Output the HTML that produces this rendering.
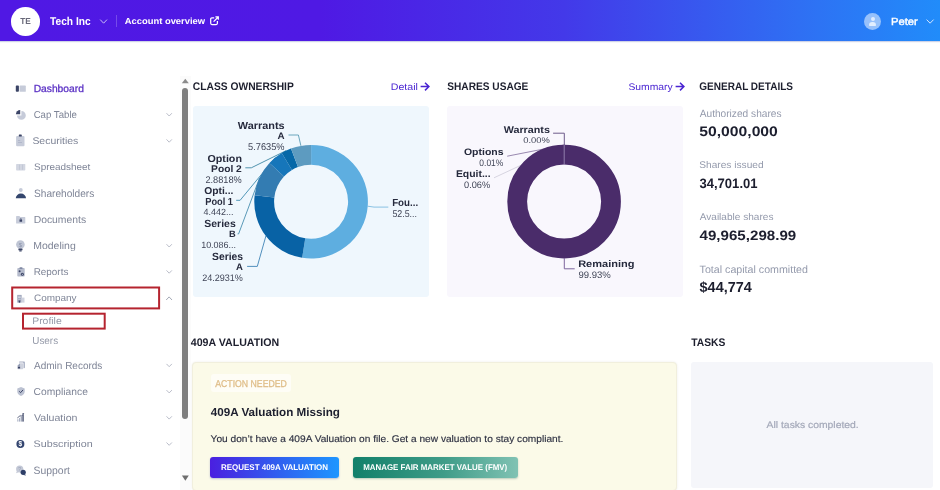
<!DOCTYPE html>
<html><head><meta charset="utf-8">
<style>
*{box-sizing:border-box;margin:0;padding:0}
html,body{width:940px;height:490px;overflow:hidden;background:#fff;font-family:"Liberation Sans",sans-serif}
.abs{position:absolute}
.t{position:absolute;white-space:nowrap;line-height:1;transform-origin:0 0;font-family:"Liberation Sans",sans-serif}
#hdr{position:absolute;left:0;top:0;width:940px;height:41px;background:linear-gradient(90deg,#5018e4 0%,#4f19e4 34%,#4339e9 60%,#2f6ff3 85%,#218cfa 100%);box-shadow:0 1px 1px rgba(60,80,160,.25)}
svg{position:absolute;left:0;top:0}
</style></head><body>
<div id="hdr"></div>
<div class="abs" style="left:11.2px;top:7px;width:28.6px;height:28.6px;border-radius:50%;background:#fff"></div>
<div class="abs" style="left:116.4px;top:15.3px;width:1px;height:12px;background:rgba(255,255,255,.22)"></div>
<div class="abs" style="left:864px;top:12.8px;width:17.3px;height:17.3px;border-radius:50%;background:rgba(255,255,255,.52);overflow:hidden"><div class="abs" style="left:6.5px;top:4px;width:4.3px;height:4.3px;border-radius:50%;background:rgba(255,255,255,.72)"></div><div class="abs" style="left:5.1px;top:8.9px;width:7.1px;height:4px;border-radius:3.2px 3.2px 0.8px 0.8px;background:rgba(255,255,255,.72)"></div></div>

<div class="abs" style="left:193px;top:106px;width:236px;height:191px;background:#eff7fd;border-radius:3px"></div>
<div class="abs" style="left:447px;top:106px;width:236px;height:191px;background:#f9f7fd;border-radius:3px"></div>
<div class="abs" style="left:192px;top:361.5px;width:484.5px;height:129px;background:#fbfae8;border:1px solid #f1efdd;border-radius:4px;box-shadow:0 0 2px rgba(120,120,80,.15)"></div>
<div class="abs" style="left:691.3px;top:361.5px;width:241.7px;height:126.3px;background:#f5f6fa;border-radius:3px"></div>
<div class="abs" style="left:210.5px;top:374.4px;width:80px;height:17.6px;background:#fefdf6;border-radius:3px"></div>
<div class="abs" style="left:210.4px;top:457.2px;width:128.4px;height:20.6px;border-radius:3px;background:linear-gradient(90deg,#4a1fe0,#2f62f0 55%,#1e96ff);box-shadow:0 1px 2px rgba(40,60,160,.3)"></div>
<div class="abs" style="left:352.8px;top:457.2px;width:165.3px;height:20.6px;border-radius:3px;background:linear-gradient(90deg,#12806a,#3f9c88 55%,#80c2b3);box-shadow:0 1px 2px rgba(40,100,90,.3)"></div>


<div class="abs" style="left:180px;top:76px;width:11px;height:414px;background:#fbfbfb"></div>
<div class="abs" style="left:182.4px;top:88.3px;width:6px;height:330.7px;border-radius:3px;background:#7e7e7e"></div>

<svg width="940" height="490" viewBox="0 0 940 490" style="will-change:transform">
<path d="M181.8,83.2 L185.3,78.7 L188.8,83.2Z" fill="#8a8a8a"/>
<path d="M181.9,475.4 L188.8,475.4 L185.35,480.8Z" fill="#6e6e6e"/>
<polyline points="100.2,19.6 103.6,23.2 107,19.6" fill="none" stroke="#c9bdf6" stroke-width="1"/>
<polyline points="926.6,19.6 930.1,23.2 933.6,19.6" fill="none" stroke="#d6e6fd" stroke-width="1"/>
<rect x="12.2" y="287.5" width="146.9" height="20.9" fill="none" stroke="#b5242f" stroke-width="2"/>
<rect x="23" y="313.7" width="81.7" height="14.9" fill="none" stroke="#b5242f" stroke-width="2"/>
<!-- external link -->
<path d="M214.2,17.8 h-2.3 a1.2,1.2 0 0 0 -1.2,1.2 v4.3 a1.2,1.2 0 0 0 1.2,1.2 h4.3 a1.2,1.2 0 0 0 1.2,-1.2 v-2.2" fill="none" stroke="#fff" stroke-width="1.25"/>
<path d="M213.6,21.6 L218,17.2 M215.4,16.9 h2.9 v2.9" fill="none" stroke="#fff" stroke-width="1.25"/>
<!-- arrows -->
<path d="M420.6,86.6 H428.6 M425,82.8 L428.9,86.6 L425,90.4" fill="none" stroke="#4a25d2" stroke-width="1.5"/>
<path d="M675.6,86.6 H683.6 M680,82.8 L683.9,86.6 L680,90.4" fill="none" stroke="#4a25d2" stroke-width="1.5"/>
<polyline points="166.5,113.2 169.2,116.0 171.9,113.2" fill="none" stroke="#b2b6c3" stroke-width="0.9"/><polyline points="166.5,139.4 169.2,142.20000000000002 171.9,139.4" fill="none" stroke="#b2b6c3" stroke-width="0.9"/><polyline points="166.5,244.2 169.2,247.0 171.9,244.2" fill="none" stroke="#b2b6c3" stroke-width="0.9"/><polyline points="166.5,270.4 169.2,273.2 171.9,270.4" fill="none" stroke="#b2b6c3" stroke-width="0.9"/><polyline points="166.5,363.9 169.2,366.7 171.9,363.9" fill="none" stroke="#b2b6c3" stroke-width="0.9"/><polyline points="166.5,390.1 169.2,392.90000000000003 171.9,390.1" fill="none" stroke="#b2b6c3" stroke-width="0.9"/><polyline points="166.5,416.3 169.2,419.1 171.9,416.3" fill="none" stroke="#b2b6c3" stroke-width="0.9"/><polyline points="166.5,442.5 169.2,445.3 171.9,442.5" fill="none" stroke="#b2b6c3" stroke-width="0.9"/><polyline points="166.2,300 169.1,296.9 172,300" fill="none" stroke="#9a9fae" stroke-width="0.9"/>

<!-- dashboard -->
<rect x="15.8" y="85.6" width="3.1" height="6.2" rx="0.8" fill="#3b4466"/><rect x="19.6" y="85.6" width="6.2" height="6.2" rx="0.6" fill="#c6cbd9"/>
<!-- cap table -->
<path d="M21.4,111.0 A4.4,4.4 0 1 1 17.0,115.4 L21.4,115.4Z" fill="#c6cbd9"/><path d="M20.2,110.0 L20.2,114.3 L15.9,114.3 A4.3,4.3 0 0 1 20.2,110.0Z" fill="#3b4466"/>
<!-- securities -->
<rect x="16.1" y="135.9" width="8.4" height="10.3" rx="1" fill="#c6cbd9"/><rect x="18.8" y="134.6" width="3" height="2" rx="0.6" fill="#3b4466"/><rect x="18" y="140" width="2.2" height="0.7" fill="#a9b0c4"/><rect x="18" y="142" width="4" height="0.7" fill="#a9b0c4"/>
<!-- spreadsheet -->
<rect x="16.1" y="163.9" width="9.2" height="6.6" rx="0.7" fill="#d2d6e1"/><rect x="19" y="164.6" width="0.6" height="5.2" fill="#b9bfcf"/><rect x="22" y="164.6" width="0.6" height="5.2" fill="#b9bfcf"/>
<!-- shareholders -->
<circle cx="20.8" cy="190" r="1.9" fill="#c6cbd9"/><path d="M15.8,198.2 A5.1,4.6 0 0 1 26,198.2Z" fill="#34466d"/>
<!-- documents -->
<path d="M16.1,216.5 a0.6,0.6 0 0 1 0.6,-0.6 h2.6 l1,1.1 h4.4 a0.6,0.6 0 0 1 0.6,0.6 v5.4 a0.6,0.6 0 0 1 -0.6,0.6 h-8 a0.6,0.6 0 0 1 -0.6,-0.6Z" fill="#c6cbd9"/><rect x="19.5" y="219.6" width="2.6" height="2.2" rx="0.4" fill="#3b4466"/><path d="M20.1,219.8 v-0.6 a0.7,0.7 0 0 1 1.4,0 v0.6" fill="none" stroke="#3b4466" stroke-width="0.5"/>
<!-- modeling -->
<circle cx="20.4" cy="244.5" r="4.3" fill="#bfc5d4"/><rect x="18.4" y="248.6" width="4.1" height="1.6" rx="0.3" fill="#3b4466"/><rect x="19.1" y="250.3" width="2.7" height="1.1" rx="0.4" fill="#3b4466"/><text x="20.4" y="246.7" font-size="6" font-family="Liberation Sans" text-anchor="middle" fill="#8d95ad">$</text>
<!-- reports -->
<rect x="17.3" y="268.1" width="7.4" height="8.5" rx="0.8" fill="#b4bacb"/><rect x="19.5" y="267.3" width="3" height="1.6" rx="0.5" fill="#7f88a3"/><circle cx="19.6" cy="271.3" r="1" fill="#3b4466"/><circle cx="22.4" cy="274.3" r="1.5" fill="#3b4466"/><circle cx="22.4" cy="274.3" r="0.6" fill="#b4bacb"/>
<!-- company -->
<rect x="17.3" y="294.9" width="4.3" height="7.7" fill="#98a0b7"/><rect x="21.6" y="297.6" width="2.9" height="5" fill="#cfd3df"/><rect x="18.1" y="295.8" width="2.7" height="0.7" fill="#e4e7ef"/><rect x="18.1" y="297.3" width="2.7" height="0.7" fill="#e4e7ef"/><rect x="18.1" y="298.8" width="2.7" height="0.7" fill="#e4e7ef"/><rect x="18.8" y="300.6" width="1.3" height="2" fill="#3b4466"/>
<!-- admin records -->
<path d="M19.6,361.5 h4.5 a0.8,0.8 0 0 1 0.8,0.8 v5.2 a0.8,0.8 0 0 1 -0.8,0.8 h-0.6 v-5 a0.9,0.9 0 0 0 -0.9,-0.9 h-3.6 v-0.3 a0.6,0.6 0 0 1 0.6,-0.6Z" fill="#a9b0c4"/><path d="M20,363.3 h2.4 a0.7,0.7 0 0 1 0.7,0.7 v4.5 a0.7,0.7 0 0 1 -0.7,0.7 h-4.4 a0.7,0.7 0 0 1 -0.7,-0.7 v-2.6Z" fill="#cdd1dd"/><path d="M17.3,366 L20,363.3 V366Z" fill="#98a0b7"/><rect x="17.9" y="366.6" width="2.2" height="1.9" fill="#3b4466"/>
<!-- compliance -->
<path d="M21,387.1 l3.7,1.3 v3 c0,2.3 -1.6,3.8 -3.7,4.6 c-2.1,-0.8 -3.7,-2.3 -3.7,-4.6 v-3Z" fill="#bcc2d2"/><polyline points="19.2,391.3 20.6,392.7 23,389.9" fill="none" stroke="#3b4466" stroke-width="1"/>
<!-- valuation -->
<rect x="17.3" y="419.2" width="1.1" height="2.4" fill="#a9b0c4"/><rect x="19" y="418" width="1.1" height="3.6" fill="#a9b0c4"/><rect x="20.7" y="416.6" width="1.1" height="5" fill="#8f97ae"/><rect x="22.4" y="415" width="1.3" height="6.6" fill="#3b4466"/><polyline points="17.3,418 20.2,415.6 21.2,416.4 23.6,413.6" fill="none" stroke="#3b4466" stroke-width="0.8"/><path d="M22,413.2 h1.9 v1.9Z" fill="#3b4466"/>
<!-- subscription -->
<circle cx="20.4" cy="443.9" r="4" fill="#33456f"/><text x="20.4" y="446.3" font-size="6.6" font-weight="bold" font-family="Liberation Sans" text-anchor="middle" fill="#fff">$</text>
<!-- support -->
<circle cx="19.7" cy="469" r="3.6" fill="#c3c8d6"/><path d="M17,471 l-1,2.2 l2.6,-0.9Z" fill="#c3c8d6"/><text x="19.7" y="471" font-size="5" font-family="Liberation Sans" text-anchor="middle" fill="#9aa2b8">?</text><circle cx="23.2" cy="472.3" r="2.6" fill="#2e3f68"/><path d="M24.8,473.9 l1.2,1.7 l-2.6,-0.5Z" fill="#2e3f68"/>

<!-- chart1 -->
<polyline points="367.7,206.2 374.0,207.1 388.3,207.1" fill="none" stroke="#7dbbe0" stroke-width="0.9"/><polyline points="265.9,236.0 257.3,266.4 247.1,266.4" fill="none" stroke="#3f83b5" stroke-width="0.9"/><polyline points="259.5,178.0 238.6,233.9 237.6,233.9" fill="none" stroke="#4a8fb0" stroke-width="0.9"/><polyline points="275.3,157.6 240.1,200.3 236.2,200.3" fill="none" stroke="#3f8cb0" stroke-width="0.9"/><polyline points="286.2,150.6 251.3,167.8 245.3,167.8" fill="none" stroke="#3f88a5" stroke-width="0.9"/><polyline points="300.9,145.8 298.4,135.0 288.5,135.0" fill="none" stroke="#5b9cb5" stroke-width="0.9"/>
<path d="M311.10,144.90A56.8,56.8 0 1 1 302.15,257.79L305.27,238.24A37.0,37.0 0 1 0 311.10,164.70Z" fill="#5eaee0"/>
<path d="M302.15,257.79A56.8,56.8 0 0 1 254.67,195.22L274.34,197.48A37.0,37.0 0 0 0 305.27,238.24Z" fill="#0862a5"/>
<path d="M254.67,195.22A56.8,56.8 0 0 1 269.47,163.06L283.98,176.53A37.0,37.0 0 0 0 274.34,197.48Z" fill="#337cb2"/>
<path d="M269.47,163.06A56.8,56.8 0 0 1 281.73,153.08L291.97,170.03A37.0,37.0 0 0 0 283.98,176.53Z" fill="#1676ba"/>
<path d="M281.73,153.08A56.8,56.8 0 0 1 290.97,148.59L297.99,167.10A37.0,37.0 0 0 0 291.97,170.03Z" fill="#0668a8"/>
<path d="M290.97,148.59A56.8,56.8 0 0 1 311.10,144.90L311.10,164.70A37.0,37.0 0 0 0 297.99,167.10Z" fill="#5d9bc0"/>

<!-- chart2 -->
<polyline points="494.0,177.8 564.0,145.2" fill="none" stroke="#d3d0dc" stroke-width="0.9"/><polyline points="507.2,156.2 564.0,145.0" fill="none" stroke="#8d7ca6" stroke-width="0.9"/><polyline points="553.1,133.2 564.3,133.2 564.3,146.0" fill="none" stroke="#6d5a8a" stroke-width="1"/>
<circle cx="564.1" cy="201.6" r="46.90" fill="none" stroke="#4a2c6a" stroke-width="19.80"/>
<line x1="564.2" y1="145" x2="564.2" y2="164.8" stroke="#9888b3" stroke-width="0.9"/>
<polyline points="564.3,258.0 564.3,268.8 574.7,268.8" fill="none" stroke="#7d659d" stroke-width="1"/>
</svg>
<svg width="940" height="490" viewBox="0 0 940 490" font-family="Liberation Sans" text-rendering="geometricPrecision" style="will-change:transform">
<text transform="translate(20.30,24) scale(0.9354,1)" font-size="8.87" font-weight="bold" fill="#6a6a7a">TE</text>
<text transform="translate(50.07,25) scale(0.8997,1)" font-size="11.34" font-weight="bold" fill="#fff">Tech Inc</text>
<text transform="translate(124.80,24) scale(1.0582,1)" font-size="8.87" font-weight="bold" fill="#fff">Account overview</text>
<text transform="translate(890.96,25) scale(1.0896,1)" font-size="10.32" font-weight="normal" fill="#fff" stroke="#fff" stroke-width="0.4">Peter</text>
<text transform="translate(33.64,92) scale(0.9959,1)" font-size="10.32" font-weight="normal" fill="#5a30c4" stroke="#5a30c4" stroke-width="0.28">Dashboard</text>
<text transform="translate(33.64,118) scale(0.9640,1)" font-size="10.03" font-weight="normal" fill="#7f8597">Cap Table</text>
<text transform="translate(32.40,144) scale(1.0741,1)" font-size="9.74" font-weight="normal" fill="#7f8597">Securities</text>
<text transform="translate(34.02,170) scale(1.0532,1)" font-size="9.45" font-weight="normal" fill="#7f8597">Spreadsheet</text>
<text transform="translate(34.01,197) scale(0.9541,1)" font-size="10.61" font-weight="normal" fill="#7f8597">Shareholders</text>
<text transform="translate(33.63,223) scale(1.0070,1)" font-size="10.32" font-weight="normal" fill="#7f8597">Documents</text>
<text transform="translate(33.22,249) scale(1.0459,1)" font-size="10.03" font-weight="normal" fill="#7f8597">Modeling</text>
<text transform="translate(33.67,275) scale(1.0172,1)" font-size="9.74" font-weight="normal" fill="#7f8597">Reports</text>
<text transform="translate(34.02,301) scale(1.0534,1)" font-size="9.45" font-weight="normal" fill="#7f8597">Company</text>
<text transform="translate(32.23,324) scale(1.0847,1)" font-size="9.59" font-weight="normal" fill="#9499a8">Profile</text>
<text transform="translate(32.31,344) scale(0.9711,1)" font-size="10.17" font-weight="normal" fill="#9499a8">Users</text>
<text transform="translate(34.01,369) scale(0.9696,1)" font-size="10.32" font-weight="normal" fill="#7f8597">Admin Records</text>
<text transform="translate(33.61,395) scale(1.0258,1)" font-size="10.03" font-weight="normal" fill="#7f8597">Compliance</text>
<text transform="translate(33.94,421) scale(1.0915,1)" font-size="9.74" font-weight="normal" fill="#7f8597">Valuation</text>
<text transform="translate(33.58,447) scale(1.1372,1)" font-size="9.45" font-weight="normal" fill="#7f8597">Subscription</text>
<text transform="translate(33.60,474) scale(0.9794,1)" font-size="10.61" font-weight="normal" fill="#7f8597">Support</text>
<text transform="translate(192.77,90) scale(0.9300,1)" font-size="11.05" font-weight="bold" fill="#1d1f2e">CLASS OWNERSHIP</text>
<text transform="translate(447.24,90) scale(0.9177,1)" font-size="11.05" font-weight="bold" fill="#1d1f2e">SHARES USAGE</text>
<text transform="translate(699.28,90) scale(0.9068,1)" font-size="11.05" font-weight="bold" fill="#1d1f2e">GENERAL DETAILS</text>
<text transform="translate(190.73,346) scale(0.9627,1)" font-size="11.05" font-weight="bold" fill="#1d1f2e">409A VALUATION</text>
<text transform="translate(691.17,346) scale(0.9335,1)" font-size="11.05" font-weight="bold" fill="#1d1f2e">TASKS</text>
<text transform="translate(390.81,90) scale(1.1071,1)" font-size="9.59" font-weight="normal" fill="#4a25d2">Detail</text>
<text transform="translate(628.40,90) scale(1.0819,1)" font-size="9.59" font-weight="normal" fill="#4a25d2">Summary</text>
<text transform="translate(699.71,117) scale(0.9697,1)" font-size="10.47" font-weight="normal" fill="#949aac">Authorized shares</text>
<text transform="translate(699.21,136) scale(1.1387,1)" font-size="13.81" font-weight="bold" fill="#1c1e2e">50,000,000</text>
<text transform="translate(699.31,168) scale(1.0417,1)" font-size="9.74" font-weight="normal" fill="#949aac">Shares issued</text>
<text transform="translate(699.40,188) scale(0.9571,1)" font-size="13.66" font-weight="bold" fill="#1c1e2e">34,701.01</text>
<text transform="translate(699.71,220) scale(1.0345,1)" font-size="9.74" font-weight="normal" fill="#949aac">Available shares</text>
<text transform="translate(699.56,240) scale(1.1065,1)" font-size="13.66" font-weight="bold" fill="#1c1e2e">49,965,298.99</text>
<text transform="translate(699.58,273) scale(1.0045,1)" font-size="10.61" font-weight="normal" fill="#949aac">Total capital committed</text>
<text transform="translate(699.55,292) scale(0.9958,1)" font-size="14.53" font-weight="bold" fill="#1c1e2e">$44,774</text>
<text transform="translate(237.80,129) scale(1.0552,1)" font-size="10.32" font-weight="bold" fill="#262a3d">Warrants</text>
<text transform="translate(277.38,139) scale(1.0582,1)" font-size="9.30" font-weight="bold" fill="#262a3d">A</text>
<text transform="translate(248.09,150) scale(0.9342,1)" font-size="9.88" font-weight="normal" fill="#404557">5.7635%</text>
<text transform="translate(207.45,162) scale(1.0549,1)" font-size="10.17" font-weight="bold" fill="#262a3d">Option</text>
<text transform="translate(211.11,172) scale(1.0500,1)" font-size="9.74" font-weight="bold" fill="#262a3d">Pool 2</text>
<text transform="translate(205.46,183) scale(0.9435,1)" font-size="9.74" font-weight="normal" fill="#404557">2.8818%</text>
<text transform="translate(204.27,194) scale(1.0284,1)" font-size="10.03" font-weight="bold" fill="#262a3d">Opti...</text>
<text transform="translate(205.28,205) scale(0.8955,1)" font-size="10.32" font-weight="bold" fill="#262a3d">Pool 1</text>
<text transform="translate(203.61,215) scale(0.9985,1)" font-size="9.01" font-weight="normal" fill="#404557">4.442...</text>
<text transform="translate(204.32,227) scale(1.0139,1)" font-size="10.32" font-weight="bold" fill="#262a3d">Series</text>
<text transform="translate(228.98,237) scale(1.0160,1)" font-size="9.16" font-weight="bold" fill="#262a3d">B</text>
<text transform="translate(201.15,248) scale(0.9964,1)" font-size="9.01" font-weight="normal" fill="#404557">10.086...</text>
<text transform="translate(212.03,260) scale(0.9867,1)" font-size="10.47" font-weight="bold" fill="#262a3d">Series</text>
<text transform="translate(235.99,270) scale(0.9946,1)" font-size="9.59" font-weight="bold" fill="#262a3d">A</text>
<text transform="translate(202.17,281) scale(0.9579,1)" font-size="9.45" font-weight="normal" fill="#404557">24.2931%</text>
<text transform="translate(392.15,206) scale(0.9440,1)" font-size="10.32" font-weight="bold" fill="#262a3d">Fou...</text>
<text transform="translate(392.40,217) scale(0.8955,1)" font-size="9.88" font-weight="normal" fill="#404557">52.5...</text>
<text transform="translate(503.70,133) scale(1.1037,1)" font-size="9.74" font-weight="bold" fill="#262a3d">Warrants</text>
<text transform="translate(523.22,143) scale(1.1121,1)" font-size="8.43" font-weight="normal" fill="#404557">0.00%</text>
<text transform="translate(463.96,155) scale(1.1090,1)" font-size="9.45" font-weight="bold" fill="#262a3d">Options</text>
<text transform="translate(479.36,166) scale(0.8965,1)" font-size="9.45" font-weight="normal" fill="#404557">0.01%</text>
<text transform="translate(455.90,177) scale(1.0687,1)" font-size="9.74" font-weight="bold" fill="#262a3d">Equit...</text>
<text transform="translate(464.03,188) scale(0.9770,1)" font-size="9.45" font-weight="normal" fill="#404557">0.06%</text>
<text transform="translate(578.16,267) scale(1.1498,1)" font-size="9.59" font-weight="bold" fill="#262a3d">Remaining</text>
<text transform="translate(578.46,278) scale(1.0103,1)" font-size="9.45" font-weight="normal" fill="#404557">99.93%</text>
<text transform="translate(215.22,387) scale(0.8817,1)" font-size="9.88" font-weight="normal" fill="#dfbd88" stroke="#dfbd88" stroke-width="0.3">ACTION NEEDED</text>
<text transform="translate(210.72,416) scale(1.0032,1)" font-size="11.63" font-weight="bold" fill="#1c1e2e">409A Valuation Missing</text>
<text transform="translate(210.60,442) scale(1.0429,1)" font-size="9.74" font-weight="normal" fill="#2e3142" stroke="#2e3142" stroke-width="0.15">You don’t have a 409A Valuation on file. Get a new valuation to stay compliant.</text>
<text transform="translate(220.96,470) scale(0.9650,1)" font-size="8.28" font-weight="bold" fill="#fff">REQUEST 409A VALUATION</text>
<text transform="translate(363.17,470) scale(0.9576,1)" font-size="8.28" font-weight="bold" fill="#fff">MANAGE FAIR MARKET VALUE (FMV)</text>
<text transform="translate(766.61,428) scale(1.0809,1)" font-size="9.59" font-weight="normal" fill="#a4a9b9" stroke="#a4a9b9" stroke-width="0.2">All tasks completed.</text>
</svg>
</body></html>
